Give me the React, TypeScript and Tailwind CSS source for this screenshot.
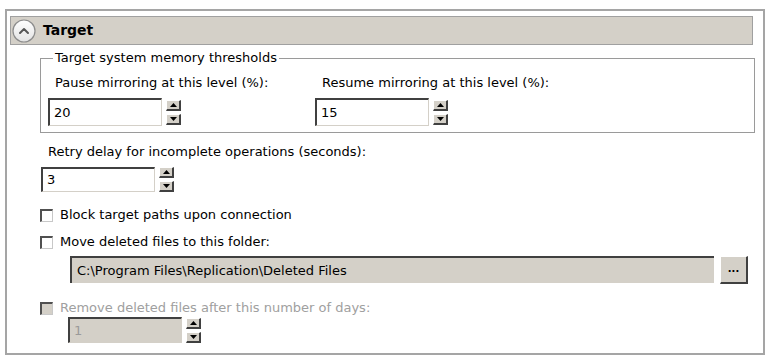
import React from 'react';

const font = { fontFamily: '"DejaVu Sans", Tahoma, sans-serif' };

const Spinner: React.FC = () => (
  <div className="flex flex-col gap-[3px]">
    {['up', 'down'].map((dir) => (
      <div
        key={dir}
        className="w-[15px] h-[11px] bg-[#d4d0c8] border-t border-l border-t-white border-l-white border-r-2 border-b-2 border-r-[#404040] border-b-[#404040] flex items-center justify-center"
      >
        <svg width="7" height="4" viewBox="0 0 7 4">
          {dir === 'up' ? <polygon points="3.5,0 7,4 0,4" fill="#000" /> : <polygon points="0,0 7,0 3.5,4" fill="#000" />}
        </svg>
      </div>
    ))}
  </div>
);

const NumberBox: React.FC<{ value: string; h: string; disabled?: boolean }> = ({ value, h, disabled }) => (
  <div className="flex items-center gap-[4px]">
    <div
      className={`w-[114px] ${h} border-t-2 border-l-2 border-t-[#404040] border-l-[#404040] border-r border-b border-r-[#d4d0c8] border-b-[#d4d0c8] flex items-center pl-[4px] text-[13px] ${
        disabled ? 'bg-[#d4d0c8] text-[#9a9a9a]' : 'bg-white text-black'
      }`}
    >
      {value}
    </div>
    <Spinner />
  </div>
);

const CheckRow: React.FC<{ label: string; disabled?: boolean }> = ({ label, disabled }) => (
  <div className="flex items-center h-[16px] gap-[7px]">
    <div
      className={`w-[13px] h-[13px] border-t-2 border-l-2 border-t-[#505050] border-l-[#505050] border-r border-b border-r-[#c8c8c8] border-b-[#c8c8c8] ${
        disabled ? 'bg-[#d4d0c8]' : 'bg-white'
      }`}
    />
    <span className={`text-[13px] leading-[16px] ${disabled ? 'text-[#a0a0a0]' : 'text-black'}`}>{label}</span>
  </div>
);

const App: React.FC = () => {
  return (
    <div className="w-[772px] h-[357px] bg-white overflow-hidden pt-[9px] pl-[5px]" style={font}>
      <div className="w-[760px] h-[346px] border-2 border-[#a5a5a5] pt-[5px] pl-[3px] pr-[10px]">
        {/* Header */}
        <div className="h-[29px] bg-[#d4d0c8] border border-[#a0a0a0] flex items-center pl-[1px] gap-[7px]">
          <svg width="24" height="24" viewBox="0 0 24 24">
            <defs>
              <linearGradient id="cg" x1="0" y1="0" x2="0" y2="1">
                <stop offset="0" stopColor="#ffffff" />
                <stop offset="1" stopColor="#e2e2e2" />
              </linearGradient>
            </defs>
            <circle cx="12" cy="12" r="11" fill="url(#cg)" stroke="#8c8c8c" strokeWidth="1.2" />
            <path d="M8 14 L12 10 L16 14" fill="none" stroke="#555" strokeWidth="2" strokeLinecap="round" strokeLinejoin="round" />
          </svg>
          <span className="text-[14px] font-bold text-black">Target</span>
        </div>

        <div className="pl-[30px] flex flex-col">
          {/* Group box */}
          <fieldset className="mt-[5px] w-[715px] border border-[#9a9a9a] pl-[7px] pb-[6px]">
            <legend className="ml-[5px] px-[2px] text-[13px] leading-[16px] text-black">Target system memory thresholds</legend>
            <div className="flex mt-[9px]">
              <div className="w-[267px] flex flex-col gap-[7px]">
                <span className="pl-[7px] text-[13px] leading-[16px]">Pause mirroring at this level (%):</span>
                <NumberBox value="20" h="h-[28px]" />
              </div>
              <div className="flex flex-col gap-[7px]">
                <span className="pl-[7px] text-[13px] leading-[16px]">Resume mirroring at this level (%):</span>
                <NumberBox value="15" h="h-[28px]" />
              </div>
            </div>
          </fieldset>

          <span className="mt-[11px] pl-[8px] text-[13px] leading-[16px]">Retry delay for incomplete operations (seconds):</span>
          <div className="mt-[7px] pl-[1px]">
            <NumberBox value="3" h="h-[25px]" />
          </div>

          <div className="mt-[15px]">
            <CheckRow label="Block target paths upon connection" />
          </div>
          <div className="mt-[11px]">
            <CheckRow label="Move deleted files to this folder:" />
          </div>
          <div className="mt-[6px] pl-[30px] flex items-start gap-[6px]">
            <div className="w-[644px] h-[27px] bg-[#d4d0c8] border-t-2 border-l-2 border-t-[#404040] border-l-[#404040] flex items-center pl-[5px] text-[13px] text-black">
              C:\Program Files\Replication\Deleted Files
            </div>
            <div className="w-[28px] h-[28px] bg-[#d4d0c8] border-t border-l border-t-white border-l-white border-r-2 border-b-2 border-r-[#404040] border-b-[#404040] flex items-center justify-center text-[10px] font-bold leading-none pb-[2px]">
              ...
            </div>
          </div>

          <div className="mt-[16px]">
            <CheckRow label="Remove deleted files after this number of days:" disabled />
          </div>
          <div className="mt-[1px] pl-[28px]">
            <NumberBox value="1" h="h-[26px]" disabled />
          </div>
        </div>
      </div>
    </div>
  );
};

export default App;
